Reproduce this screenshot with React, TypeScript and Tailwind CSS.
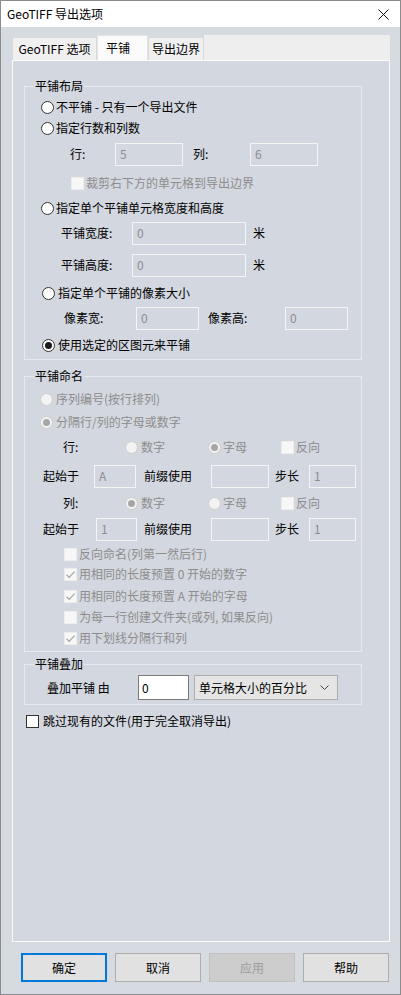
import React from 'react';

function Radio({ checked = false, disabled = false }: { checked?: boolean; disabled?: boolean }) {
    return (
        <span
            className={`flex h-[13px] w-[13px] shrink-0 items-center justify-center rounded-full border ${
                disabled ? 'border-[#cdcdcd] bg-[#f3f3f3]' : 'border-[#333333] bg-white'
            }`}
        >
            {checked && (
                <span className={`h-[7px] w-[7px] rounded-full ${disabled ? 'bg-[#a6a6a6]' : 'bg-[#1b1b1b]'}`} />
            )}
        </span>
    );
}

function Check({ checked = false, disabled = false }: { checked?: boolean; disabled?: boolean }) {
    return (
        <span
            className={`flex h-[13px] w-[13px] shrink-0 items-center justify-center border ${
                disabled ? 'border-[#ededed] bg-[#f7f7f7]' : 'border-[#333333] bg-white'
            }`}
        >
            {checked && (
                <svg width="11" height="11" viewBox="0 0 11 11">
                    <path d="M1.5 5.8 L4.2 8.4 L9.6 2.6" fill="none" stroke="#a9a9a9" strokeWidth="1.3" />
                </svg>
            )}
        </span>
    );
}

// disabled text box, same colour as the panel with a pale edge
function Field({ className, value = '' }: { className: string; value?: string }) {
    return (
        <div className={`flex h-[23px] shrink-0 items-center border border-[#f5f5f5] pl-[4px] text-[#8d8d8d] ${className}`}>
            {value}
        </div>
    );
}

const groupCls = 'ml-[11px] w-[338px] border border-[#e6e9ee]';
const legendCls = 'ml-[9px] px-[1px] leading-[16px]';

export default function App() {
    return (
        <div className="flex h-[995px] w-[401px] flex-col border border-[#8c8c8c] bg-[#d6dae1] font-['Noto_Sans_CJK_SC','Noto_Sans',sans-serif] text-[12px] leading-[16px] text-black">
            {/* title bar */}
            <div className="flex h-[26px] shrink-0 items-center justify-between bg-white pl-[6px] pr-[11px]">
                <span>GeoTIFF 导出选项</span>
                <svg width="11" height="11" viewBox="0 0 11 11">
                    <path d="M0.5 0.5 L10.5 10.5 M10.5 0.5 L0.5 10.5" stroke="#111111" strokeWidth="1" />
                </svg>
            </div>

            <div className="flex flex-1 flex-col pl-[11px] pr-[10px] pt-[8px]">
                {/* tabs */}
                <div className="flex h-[25px] items-end">
                    <div className="flex h-[23px] w-[85px] items-center justify-center border border-b-0 border-[#d9d9d9] bg-[#f0f0f0]">
                        GeoTIFF 选项
                    </div>
                    <div className="flex h-[25px] w-[51px] items-center border border-b-0 border-[#e4e4e4] bg-[#fbfbfb] pl-[8px]">
                        平铺
                    </div>
                    <div className="flex h-[23px] w-[56px] items-center justify-center border border-b-0 border-[#d9d9d9] bg-[#f0f0f0]">
                        导出边界
                    </div>
                    <div className="h-[25px] flex-1 bg-[#eeeeee]" />
                </div>

                {/* tab page */}
                <div className="flex h-[882px] flex-col border border-[#fbfbfb] bg-[#d3d7df]">
                    {/* 平铺布局 */}
                    <fieldset className={`mt-[17px] ${groupCls}`}>
                        <legend className={legendCls}>平铺布局</legend>
                        <div className="flex flex-col pb-[3px] pt-[2px]">
                            <div className="flex h-[22px] items-center pl-[16px]">
                                <Radio />
                                <span className="ml-[2px]">不平铺 - 只有一个导出文件</span>
                            </div>
                            <div className="flex h-[20px] items-center pl-[16px]">
                                <Radio />
                                <span className="ml-[2px]">指定行数和列数</span>
                            </div>
                            <div className="flex h-[32px] items-center pl-[45px]">
                                <span className="w-[45px]">行:</span>
                                <Field className="w-[68px]" value="5" />
                                <span className="ml-[10px] w-[57px]">列:</span>
                                <Field className="w-[68px]" value="6" />
                            </div>
                            <div className="flex h-[26px] items-center pl-[46px]">
                                <Check disabled />
                                <span className="ml-[2px] text-[#8d8d8d]">裁剪右下方的单元格到导出边界</span>
                            </div>
                            <div className="flex h-[24px] items-center pl-[16px]">
                                <Radio />
                                <span className="ml-[2px]">指定单个平铺单元格宽度和高度</span>
                            </div>
                            <div className="flex h-[26px] items-center pl-[36px]">
                                <span className="w-[71px]">平铺宽度:</span>
                                <Field className="w-[114px]" value="0" />
                                <span className="ml-[7px]">米</span>
                            </div>
                            <div className="flex h-[38px] items-center pl-[36px]">
                                <span className="w-[71px]">平铺高度:</span>
                                <Field className="w-[114px]" value="0" />
                                <span className="ml-[7px]">米</span>
                            </div>
                            <div className="flex h-[18px] items-center pl-[17px]">
                                <Radio />
                                <span className="ml-[3px]">指定单个平铺的像素大小</span>
                            </div>
                            <div className="flex h-[32px] items-center pl-[39px]">
                                <span className="w-[72px]">像素宽:</span>
                                <Field className="w-[63px]" value="0" />
                                <span className="ml-[9px] w-[77px]">像素高:</span>
                                <Field className="w-[63px]" value="0" />
                            </div>
                            <div className="flex h-[22px] items-center pl-[17px]">
                                <Radio checked />
                                <span className="ml-[3px]">使用选定的区图元来平铺</span>
                            </div>
                        </div>
                    </fieldset>

                    {/* 平铺命名 */}
                    <fieldset className={`mt-[8px] ${groupCls}`}>
                        <legend className={legendCls}>平铺命名</legend>
                        <div className="flex flex-col pb-[3px] text-[#8d8d8d]">
                            <div className="mt-[5px] flex h-[20px] items-center pl-[15px]">
                                <Radio disabled />
                                <span className="ml-[3px]">序列编号(按行排列)</span>
                            </div>
                            <div className="mt-[3px] flex h-[20px] items-center pl-[15px]">
                                <Radio disabled checked />
                                <span className="ml-[3px]">分隔行/列的字母或数字</span>
                            </div>
                            <div className="mt-[5px] flex h-[20px] items-center pl-[38px]">
                                <span className="w-[62px] text-black">行:</span>
                                <div className="flex w-[83px] items-center">
                                    <Radio disabled />
                                    <span className="ml-[3px]">数字</span>
                                </div>
                                <div className="flex w-[73px] items-center">
                                    <Radio disabled checked />
                                    <span className="ml-[2px]">字母</span>
                                </div>
                                <div className="flex items-center">
                                    <Check disabled />
                                    <span className="ml-[2px]">反向</span>
                                </div>
                            </div>
                            <div className="mt-[7px] flex h-[24px] items-center pl-[18px]">
                                <span className="w-[51px] text-black">起始于</span>
                                <Field className="w-[42px]" value="A" />
                                <span className="ml-[8px] w-[67px] text-black">前缀使用</span>
                                <Field className="w-[58px]" />
                                <span className="ml-[6px] w-[34px] text-black">步长</span>
                                <Field className="w-[47px]" value="1" />
                            </div>
                            <div className="mt-[5px] flex h-[20px] items-center pl-[38px]">
                                <span className="w-[62px] text-black">列:</span>
                                <div className="flex w-[83px] items-center">
                                    <Radio disabled checked />
                                    <span className="ml-[3px]">数字</span>
                                </div>
                                <div className="flex w-[73px] items-center">
                                    <Radio disabled />
                                    <span className="ml-[2px]">字母</span>
                                </div>
                                <div className="flex items-center">
                                    <Check disabled />
                                    <span className="ml-[2px]">反向</span>
                                </div>
                            </div>
                            <div className="mt-[4px] flex h-[24px] items-center pl-[18px]">
                                <span className="w-[53px] text-black">起始于</span>
                                <Field className="w-[41px]" value="1" />
                                <span className="ml-[7px] w-[67px] text-black">前缀使用</span>
                                <Field className="w-[58px]" />
                                <span className="ml-[6px] w-[34px] text-black">步长</span>
                                <Field className="w-[47px]" value="1" />
                            </div>
                            <div className="mt-[3px] flex h-[20px] items-center pl-[39px]">
                                <Check disabled />
                                <span className="ml-[2px]">反向命名(列第一然后行)</span>
                            </div>
                            <div className="flex h-[20px] items-center pl-[39px]">
                                <Check disabled checked />
                                <span className="ml-[2px]">用相同的长度预置 0 开始的数字</span>
                            </div>
                            <div className="mt-[2px] flex h-[20px] items-center pl-[39px]">
                                <Check disabled checked />
                                <span className="ml-[2px]">用相同的长度预置 A 开始的字母</span>
                            </div>
                            <div className="mt-[1px] flex h-[20px] items-center pl-[39px]">
                                <Check disabled />
                                <span className="ml-[2px]">为每一行创建文件夹(或列, 如果反向)</span>
                            </div>
                            <div className="mt-[1px] flex h-[20px] items-center pl-[39px]">
                                <Check disabled checked />
                                <span className="ml-[2px]">用下划线分隔行和列</span>
                            </div>
                        </div>
                    </fieldset>

                    {/* 平铺叠加 */}
                    <fieldset className={`mt-[4px] ${groupCls}`}>
                        <legend className={legendCls}>平铺叠加</legend>
                        <div className="flex flex-col pb-[4px]">
                            <div className="mt-[3px] flex h-[25px] items-center pl-[22px]">
                                <span className="w-[91px]">叠加平铺 由</span>
                                <div className="flex h-[25px] w-[51px] items-center border border-[#7a7a7a] bg-white pl-[3px]">
                                    0
                                </div>
                                <div className="ml-[5px] flex h-[25px] w-[144px] items-center justify-between border border-[#adadad] bg-[#e5e5e5] pl-[4px] pr-[8px]">
                                    <span>单元格大小的百分比</span>
                                    <svg width="9" height="5" viewBox="0 0 9 5">
                                        <polyline points="0.5,0.5 4.5,4.5 8.5,0.5" fill="none" stroke="#444444" strokeWidth="1" />
                                    </svg>
                                </div>
                            </div>
                        </div>
                    </fieldset>

                    <div className="ml-[13px] mt-[6px] flex h-[20px] items-center">
                        <Check />
                        <span className="ml-[4px]">跳过现有的文件(用于完全取消导出)</span>
                    </div>
                </div>

                {/* dialog buttons */}
                <div className="mt-[11px] flex gap-[8px] pl-[9px]">
                    <button className="flex h-[29px] w-[86px] items-center justify-center border-2 border-[#0078d7] bg-[#e1e1e1]">
                        确定
                    </button>
                    <button className="flex h-[29px] w-[86px] items-center justify-center border border-[#adadad] bg-[#e1e1e1]">
                        取消
                    </button>
                    <button className="flex h-[29px] w-[86px] items-center justify-center border border-[#bfbfbf] bg-[#cccccc] text-[#9d9d9d]">
                        应用
                    </button>
                    <button className="flex h-[29px] w-[86px] items-center justify-center border border-[#adadad] bg-[#e1e1e1]">
                        帮助
                    </button>
                </div>
            </div>
        </div>
    );
}
